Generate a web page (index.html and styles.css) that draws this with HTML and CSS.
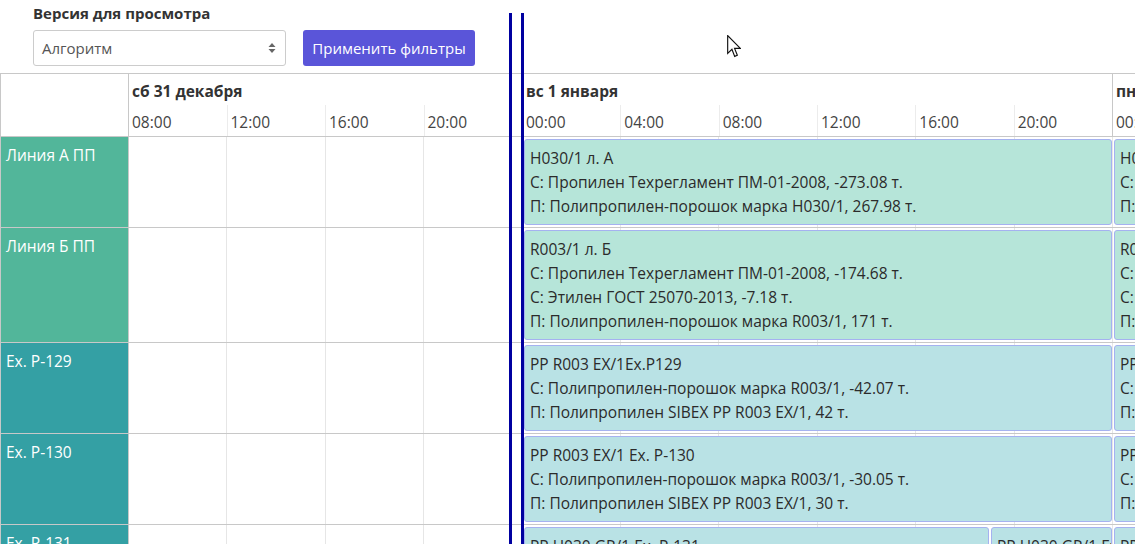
FILE: index.html
```html
<!DOCTYPE html>
<html lang="ru">
<head>
<meta charset="utf-8">
<title>Планирование</title>
<link rel="stylesheet" href="styles.css">
</head>
<body>
<div class="page">
  <div class="toolbar">
    <div class="label">Версия для просмотра</div>
    <div class="controls">
      <div class="select">
        <span>Алгоритм</span>
        <svg class="sel-arrows" width="8" height="12" viewBox="0 0 8 12"><path d="M4 1 L7.5 5 H0.5 Z M4 11 L7.5 7 H0.5 Z" fill="#666"/></svg>
      </div>
      <button class="btn">Применить фильтры</button>
    </div>
  </div>

  <div class="scheduler">
    <div class="head">
      <div class="res-head"></div>
      <div class="days">
        <div class="day part">
          <div class="day-title">сб 31 декабря</div>
          <div class="slots"><div class="slot">08:00</div><div class="slot">12:00</div><div class="slot">16:00</div><div class="slot">20:00</div></div>
        </div>
        <div class="day">
          <div class="day-title">вс 1 января</div>
          <div class="slots"><div class="slot">00:00</div><div class="slot">04:00</div><div class="slot">08:00</div><div class="slot">12:00</div><div class="slot">16:00</div><div class="slot">20:00</div></div>
        </div>
        <div class="day">
          <div class="day-title">пн 2 января</div>
          <div class="slots"><div class="slot">00:00</div><div class="slot">04:00</div><div class="slot">08:00</div><div class="slot">12:00</div><div class="slot">16:00</div><div class="slot">20:00</div></div>
        </div>
      </div>
    </div>

    <div class="row">
      <div class="res green">Линия А ПП</div>
      <div class="lane">
        <div class="gap"></div>
        <div class="ev g" style="width:588px">
          <div>H030/1 л. А</div>
          <div>С: Пропилен Техрегламент ПМ-01-2008, -273.08 т.</div>
          <div>П: Полипропилен-порошок марка H030/1, 267.98 т.</div>
        </div>
        <div class="ev g" style="width:588px">
          <div>H030/1 л. А</div>
          <div>С: Пропилен Техрегламент ПМ-01-2008, -273.08 т.</div>
          <div>П: Полипропилен-порошок марка H030/1, 267.98 т.</div>
        </div>
      </div>
    </div>

    <div class="row">
      <div class="res green">Линия Б ПП</div>
      <div class="lane">
        <div class="gap"></div>
        <div class="ev g" style="width:588px">
          <div>R003/1 л. Б</div>
          <div>С: Пропилен Техрегламент ПМ-01-2008, -174.68 т.</div>
          <div>С: Этилен ГОСТ 25070-2013, -7.18 т.</div>
          <div>П: Полипропилен-порошок марка R003/1, 171 т.</div>
        </div>
        <div class="ev g" style="width:588px">
          <div>R003/1 л. Б</div>
          <div>С: Пропилен Техрегламент ПМ-01-2008, -174.68 т.</div>
          <div>С: Этилен ГОСТ 25070-2013, -7.18 т.</div>
          <div>П: Полипропилен-порошок марка R003/1, 171 т.</div>
        </div>
      </div>
    </div>

    <div class="row">
      <div class="res teal">Ex. P-129</div>
      <div class="lane">
        <div class="gap"></div>
        <div class="ev c" style="width:588px">
          <div>PP R003 EX/1Ex.P129</div>
          <div>С: Полипропилен-порошок марка R003/1, -42.07 т.</div>
          <div>П: Полипропилен SIBEX PP R003 EX/1, 42 т.</div>
        </div>
        <div class="ev c" style="width:588px">
          <div>PP R003 EX/1Ex.P129</div>
          <div>С: Полипропилен-порошок марка R003/1, -42.07 т.</div>
          <div>П: Полипропилен SIBEX PP R003 EX/1, 42 т.</div>
        </div>
      </div>
    </div>

    <div class="row">
      <div class="res teal">Ex. P-130</div>
      <div class="lane">
        <div class="gap"></div>
        <div class="ev c" style="width:588px">
          <div>PP R003 EX/1 Ex. P-130</div>
          <div>С: Полипропилен-порошок марка R003/1, -30.05 т.</div>
          <div>П: Полипропилен SIBEX PP R003 EX/1, 30 т.</div>
        </div>
        <div class="ev c" style="width:588px">
          <div>PP R003 EX/1 Ex. P-130</div>
          <div>С: Полипропилен-порошок марка R003/1, -30.05 т.</div>
          <div>П: Полипропилен SIBEX PP R003 EX/1, 30 т.</div>
        </div>
      </div>
    </div>

    <div class="row">
      <div class="res teal">Ex. P-131</div>
      <div class="lane">
        <div class="gap"></div>
        <div class="ev c" style="width:465px">
          <div>PP H030 GR/1 Ex. P-131</div>
          <div>С: Полипропилен-порошок марка H030/1, -25.1 т.</div>
          <div>П: Полипропилен SIBEX PP H030 GR/1, 25 т.</div>
        </div>
        <div class="ev c" style="width:121px">
          <div>PP H030 GR/1 Ex. P-131</div>
          <div>С: Полипропилен-порошок</div>
          <div>П: Полипропилен SIBEX</div>
        </div>
        <div class="ev c" style="width:588px">
          <div>PP H030 GR/1 Ex. P-131</div>
          <div>С: Полипропилен-порошок марка H030/1, -25.1 т.</div>
          <div>П: Полипропилен SIBEX PP H030 GR/1, 25 т.</div>
        </div>
      </div>
    </div>
  </div>

  <div class="now now-a"></div>
  <div class="now now-b"></div>

  <svg class="cursor" width="14" height="23" viewBox="0 0 12 20">
    <path d="M0.5 0.5 L0.5 16 L4.2 12.5 L6.6 18.6 L8.9 17.6 L6.5 11.6 L11.5 11.6 Z" fill="#fff" stroke="#111" stroke-width="1" stroke-linejoin="miter"/>
  </svg>
</div>
</body>
</html>
```

FILE: styles.css
```css
html, body {
  margin: 0;
  padding: 0;
}

body {
  font-family: "Open Sans", "Noto Sans", sans-serif;
  color: #333;
  background: #fff;
  overflow: hidden;
}

.page {
  position: relative;
  width: 1135px;
  height: 544px;
  overflow: hidden;
}

/* ---------- toolbar ---------- */
.toolbar {
  padding: 4px 0 7px 33px;
}

.label {
  font-size: 15px;
  font-weight: 700;
  line-height: 18px;
  color: #333;
  margin-bottom: 8px;
}

.controls {
  display: flex;
  gap: 17px;
}

.select {
  box-sizing: border-box;
  width: 253px;
  height: 36px;
  border: 1px solid #ccc;
  border-radius: 3px;
  display: flex;
  align-items: center;
  justify-content: space-between;
  padding: 0 9px 0 8px;
  font-size: 15px;
  color: #555;
}

.btn {
  box-sizing: border-box;
  width: 172px;
  height: 36px;
  border: 0;
  border-radius: 3px;
  padding: 0;
  background: #5a55d9;
  color: #fff;
  font-family: "Open Sans", "Noto Sans", sans-serif;
  font-size: 15px;
}

/* ---------- scheduler ---------- */
.scheduler {
  border-top: 1px solid #c8c8c8;
  border-left: 1px solid #c8c8c8;
  font-size: 15.5px;
}

.head {
  display: flex;
  border-bottom: 1px solid #c8c8c8;
}

.res-head {
  flex: none;
  box-sizing: border-box;
  width: 128px;
  border-right: 1px solid #c8c8c8;
}

.days {
  display: flex;
  min-width: 0;
}

.day {
  flex: none;
  box-sizing: border-box;
  width: 590px;
  border-right: 1px solid #c8c8c8;
}

.day.part {
  width: 394px;
}

.day-title {
  height: 31px;
  box-sizing: border-box;
  padding: 7px 0 0 3px;
  line-height: 20px;
  font-weight: 700;
  white-space: nowrap;
}

.slots {
  display: flex;
  height: 31px;
}

.slot {
  flex: 1;
  box-sizing: border-box;
  padding: 7px 0 0 3px;
  line-height: 20px;
  color: #444;
  border-right: 1px solid #ececec;
}

.slot:last-child {
  border-right: 0;
}

.row {
  display: flex;
  border-bottom: 1px solid #c8c8c8;
}

.res {
  flex: none;
  box-sizing: border-box;
  width: 128px;
  border-right: 1px solid #c8c8c8;
  padding: 8px 5px;
  line-height: 20px;
  color: #fff;
}

.res.green { background: #52b69a; }
.res.teal  { background: #34a0a4; }

.lane {
  flex: 1;
  min-width: 0;
  display: flex;
  overflow: hidden;
  background-image: repeating-linear-gradient(to right,
    transparent 0, transparent 97.4px,
    #e6e6e6 97.4px, #e6e6e6 98.4px);
}

.gap {
  flex: none;
  width: 394px;
}

.ev {
  flex: none;
  box-sizing: border-box;
  margin: 2px 1px;
  padding: 6px 5px;
  border: 1px solid #a5b2f0;
  border-radius: 3px;
  line-height: 24px;
  color: #2b2b2b;
  white-space: nowrap;
  overflow: hidden;
}

.ev.g { background: #b6e5d9; }
.ev.c { background: #b9e2e5; }

/* ---------- overlays ---------- */
.now {
  position: absolute;
  top: 13px;
  bottom: 0;
  width: 3px;
  background: #0000a0;
}

.now-a { left: 509px; }
.now-b { left: 521px; }

.cursor {
  position: absolute;
  left: 727px;
  top: 35px;
}
```
